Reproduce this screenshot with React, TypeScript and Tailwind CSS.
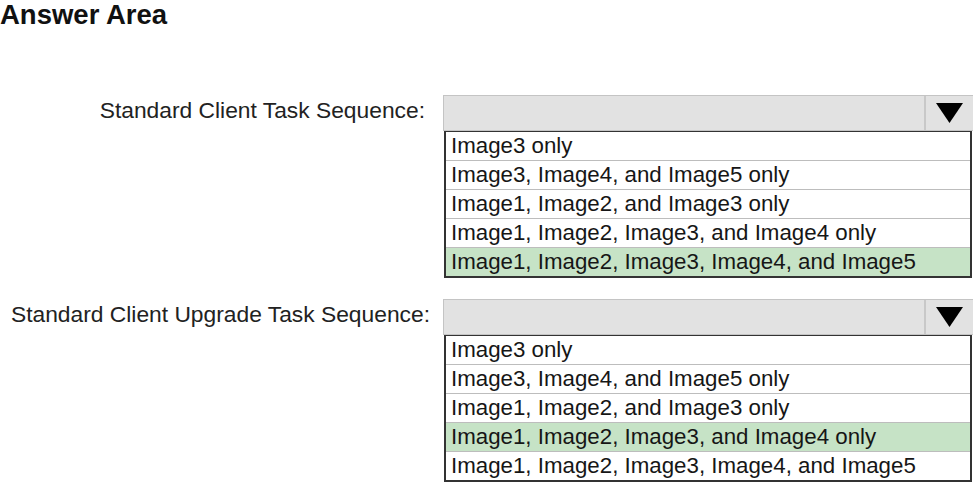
import React from 'react';

const opts = [
  'Image3 only',
  'Image3, Image4, and Image5 only',
  'Image1, Image2, and Image3 only',
  'Image1, Image2, Image3, and Image4 only',
  'Image1, Image2, Image3, Image4, and Image5'
];

function Dropdown({ label, selected, pr }: { label: string; selected: number; pr: string }) {
  return (
    <div className="flex">
      <div className={`w-[443px] h-[36px] pb-[6px] flex items-center justify-end text-[22.8px] text-[#222] ${pr}`}>
        {label}
      </div>
      <div className="w-[530px]">
        <div className="h-[36px] flex bg-[#e2e2e2] border border-[#c4c4c4] border-r-0">
          <div className="flex-1" />
          <div className="w-[49px] border-l-2 border-[#c8c8c8] flex items-center justify-center">
            <svg width="27" height="20" viewBox="0 0 27 20">
              <polygon points="0,0 27,0 13.5,20" fill="#000" />
            </svg>
          </div>
        </div>
        <div className="ml-[1px] w-[528px] border-2 border-t-[1.5px] border-[#333] bg-white">
          {opts.map((o, i) => (
            <div
              key={o}
              className={`h-[28px] flex items-center pl-[5px] text-[22.3px] text-[#161616] leading-none ${i < opts.length - 1 ? 'border-b border-[#bdbdbd] h-[29px]' : ''} ${i === selected ? 'bg-[#c6e3c6]' : ''}`}>
              {o}
            </div>
          ))}
        </div>
      </div>
    </div>
  );
}

export default function App() {
  return (
    <div className="w-[973px] h-[484px] bg-white overflow-hidden" style={{ fontFamily: '"Liberation Sans", Arial, sans-serif' }}>
      <div className="h-[95px]">
        <h1 className="text-[27.5px] font-bold leading-none pt-[1px] text-[#111]">Answer Area</h1>
      </div>
      <Dropdown label="Standard Client Task Sequence:" selected={4} pr="pr-[18px]" />
      <div className="h-[21px]" />
      <Dropdown label="Standard Client Upgrade Task Sequence:" selected={3} pr="pr-[13px]" />
    </div>
  );
}
